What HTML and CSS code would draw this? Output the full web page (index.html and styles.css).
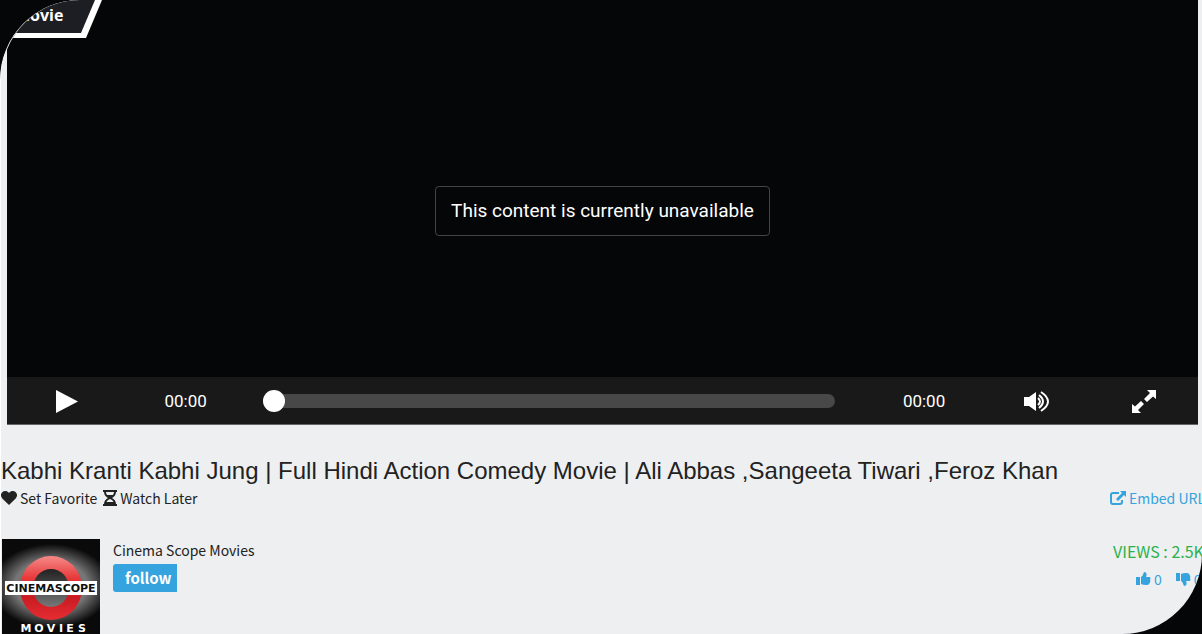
FILE: index.html
```html
<!DOCTYPE html>
<html lang="en">
<head>
  <meta charset="UTF-8">
  <meta name="viewport" content="width=device-width, initial-scale=1.0">
  <title>Kabhi Kranti Kabhi Jung</title>
  <link rel="stylesheet" href="styles.css">
</head>
<body>
  <main class="page">
    <!-- Player -->
    <section class="player">
      <div class="ribbon"><span>Movie</span></div>
      <div class="screen">
        <p class="message">This content is currently unavailable</p>
      </div>
      <div class="controls">
        <button type="button" aria-label="Play">
          <svg width="22" height="24" viewBox="0 0 22 24"><path d="M0 1L22 12.500L0 24Z"/></svg>
        </button>
        <span class="time">00:00</span>
        <input type="range" class="seek" min="0" max="100" value="0" aria-label="Seek">
        <span class="time">00:00</span>
        <button type="button" aria-label="Volume">
          <svg width="26" height="22" viewBox="0 0 26 22">
            <path d="M0 7H5L12 2V21L5 16H0Z"/>
            <path class="wave" d="M14 8Q18 11.500 14 15M15 5Q23 11.500 15 18M17 2Q31 11.500 17 21"/>
          </svg>
        </button>
        <button type="button" aria-label="Fullscreen">
          <svg width="24" height="24" viewBox="0 0 24 24"><path d="M15 1H24V10L21 7.500L15 13L12 10L18 4ZM0 15L3 17.500L9 12L12 15L6 21L9 24H0Z"/></svg>
        </button>
      </div>
    </section>

    <h1>Kabhi Kranti Kabhi Jung | Full Hindi Action Comedy Movie | Ali Abbas ,Sangeeta Tiwari ,Feroz Khan</h1>

    <!-- Actions -->
    <div class="row">
      <div class="actions">
        <a href="#">
          <svg width="16" height="14" viewBox="0 0 16 14"><path d="M8 14L1.300 7.500C-3 2.500 4-3 8 2C12-3 19 2.500 14.700 7.500Z"/></svg>
          Set Favorite
        </a>
        <a href="#">
          <svg width="14" height="16" viewBox="0 0 14 16"><path fill-rule="evenodd" d="M0 0H14V2H13C13 5 11 7 9 8C11 9 13 11 13 14H14V16H0V14H1C1 11 3 9 5 8C3 7 1 5 1 2H0ZM3 2C3 3 3.300 4 4 5H10C10.700 4 11 3 11 2ZM7 9C5.500 9.500 4 10.500 3.500 12H10.500C10 10.500 8.500 9.500 7 9Z"/></svg>
          Watch Later
        </a>
      </div>
      <a href="#" class="side embed">
        <svg width="16" height="14" viewBox="0 0 16 14"><path class="outline" d="M9 2H3Q1 2 1 4V11Q1 13 3 13H10Q12 13 12 11V9"/><path d="M10 0H16V6L14 4L8 10L6 8L12 2Z"/></svg>
        Embed URL
      </a>
    </div>

    <!-- Channel -->
    <div class="row channel">
      <svg class="logo" width="98" height="95" viewBox="0 0 98 95" role="img" aria-label="Cinemascope Movies">
        <defs>
          <radialGradient id="glow">
            <stop offset="0" stop-color="#555"/>
            <stop offset="0.600" stop-color="#777"/>
            <stop offset="1" stop-color="#0a0a0a"/>
          </radialGradient>
          <linearGradient id="hole" x1="0" y1="0" x2="0" y2="1">
            <stop offset="0" stop-color="#222"/>
            <stop offset="1" stop-color="#777"/>
          </linearGradient>
          <linearGradient id="red" x1="0" y1="0" x2="0" y2="1">
            <stop offset="0" stop-color="#f58a88"/>
            <stop offset="0.350" stop-color="#e8383a"/>
            <stop offset="0.650" stop-color="#c91c22"/>
            <stop offset="1" stop-color="#e52d33"/>
          </linearGradient>
        </defs>
        <rect width="98" height="95" fill="#0a0a0a"/>
        <ellipse cx="49" cy="47" rx="60" ry="42" fill="url(#glow)"/>
        <ellipse cx="49" cy="49" rx="31" ry="32" fill="url(#red)"/>
        <ellipse cx="49" cy="49" rx="18" ry="19" fill="url(#hole)"/>
        <rect x="3" y="42" width="92" height="14" fill="#fff"/>
        <text class="logo-name" x="49" y="53">CINEMASCOPE</text>
        <text class="logo-sub" y="93"><tspan x="24">M</tspan><tspan x="37">O</tspan><tspan x="49">V</tspan><tspan x="59">I</tspan><tspan x="68">E</tspan><tspan x="80">S</tspan></text>
      </svg>
      <div class="about">
        <p>Cinema Scope Movies</p>
        <button type="button" class="follow">follow</button>
      </div>
      <div class="side">
        <p class="views">VIEWS : 2.5K</p>
        <div class="votes">
          <a href="#" aria-label="Like"><svg width="15" height="14" viewBox="0 0 15 14"><path d="M0 5H4V13H0ZM5 5C7 4 7 2 8 0C11 0 11 3 10 5H14Q15 6 14 8Q15 9 14 10Q14 11 13 12Q13 13 10 13Q7 13 5 12Z"/></svg> 0</a>
          <a href="#" aria-label="Dislike"><svg width="15" height="14" viewBox="0 0 15 14"><path d="M0 1H4V9H0ZM5 2Q7 1 10 1Q13 1 13 2Q14 3 14 4Q15 5 14 6Q15 8 14 9H10C11 11 11 14 8 14C7 12 7 10 5 9Z"/></svg> 0</a>
        </div>
      </div>
    </div>
  </main>
</body>
</html>
```
FILE: styles.css
```css
* {
  box-sizing: border-box;
}

body {
  margin: 0;
  background-color: #040607;
  color: #222;
  font-family: "Noto Sans CJK SC", sans-serif;
  font-size: 14px;
  line-height: 20px;
}

h1, p {
  margin: 0;
}

a {
  color: inherit;
  text-decoration: none;
}

svg {
  flex: none;
  fill: currentColor;
}

.page {
  min-height: 100vh;
  overflow: hidden;
  border-left: 1px solid #fff;
  border-radius: 80px 0 80px 0;
  background-color: #edeff1;
}

/* Player */
.player {
  position: relative;
  margin: 0 4px 0 6px;
  border-bottom: 1px solid #666;
  background-color: #040607;
  color: #fff;
  font-family: Roboto, sans-serif;
}

.ribbon {
  position: absolute;
  top: 0;
  left: 0;
  width: 95px;
  height: 38px;
  background-color: #fff;
  clip-path: polygon(0 0, 100% 0, 79px 100%, 0 100%);
}

.ribbon span {
  display: block;
  width: 88px;
  height: 33px;
  padding: 5px 0 0 8px;
  background-color: #1c1e23;
  clip-path: polygon(0 0, 100% 0, 74px 100%, 0 100%);
  font-family: "Open Sans", sans-serif;
  font-size: 16px;
  font-weight: bold;
}

.screen {
  display: flex;
  justify-content: center;
  align-items: center;
  min-height: 377px;
  padding-top: 45px;
}

.message {
  padding: 12px 15px;
  border: 1px solid #444;
  border-radius: 4px;
  font-size: 19px;
  line-height: 24px;
}

.controls {
  display: grid;
  grid-template-columns: 10% 10% 52% 10% 9% 9%;
  align-items: center;
  height: 47px;
  background-color: #19191a;
  text-align: center;
}

.controls button {
  display: flex;
  justify-content: center;
  padding: 0;
  border: none;
  background: none;
  color: #fff;
  cursor: pointer;
}

.wave {
  fill: none;
  stroke: #fff;
  stroke-width: 2;
}

.time {
  font-size: 17px;
}

.seek {
  appearance: none;
  height: 22px;
  margin: 0 30px 0 18px;
  background: none;
}

.seek::-webkit-slider-runnable-track {
  height: 14px;
  border-radius: 7px;
  background-color: #484848;
}

.seek::-webkit-slider-thumb {
  appearance: none;
  width: 22px;
  height: 22px;
  margin-top: -4px;
  border-radius: 50%;
  background-color: #fff;
}

/* Details */
h1 {
  margin: 30px 0 1px;
  font-family: "Liberation Sans", Arial, sans-serif;
  font-size: 24px;
  font-weight: normal;
  line-height: 32px;
  white-space: nowrap;
}

.row {
  display: flex;
  justify-content: space-between;
}

.actions {
  display: flex;
  gap: 6px;
}

.actions a, .embed, .votes a {
  display: flex;
  align-items: center;
  gap: 3px;
  white-space: nowrap;
}

.side {
  flex: none;
  width: 92px;
  white-space: nowrap;
}

.embed, .votes {
  color: #35a3dd;
}

.outline {
  fill: none;
  stroke: currentColor;
  stroke-width: 2;
}

.channel {
  gap: 13px;
  margin-top: 31px;
}

.logo {
  margin-left: 1px;
}

.logo-name, .logo-sub {
  font-family: "DejaVu Sans", sans-serif;
  font-size: 11px;
  font-weight: bold;
  text-anchor: middle;
}

.logo-name {
  fill: #111;
}

.logo-sub {
  fill: #fff;
}

.about {
  flex: 1;
  padding-top: 1px;
}

.follow {
  display: block;
  height: 28px;
  margin-top: 4px;
  padding: 0 6px 0 12px;
  border: none;
  border-radius: 3px 0 0 3px;
  background-color: #35a3dd;
  color: #fff;
  font: bold 15px "Noto Sans CJK SC", sans-serif;
  line-height: 28px;
}

.views {
  padding: 2px 0 0 3px;
  color: #2bb24c;
  font-size: 16px;
}

.votes {
  display: flex;
  gap: 14px;
  padding: 8px 0 0 26px;
}
```
